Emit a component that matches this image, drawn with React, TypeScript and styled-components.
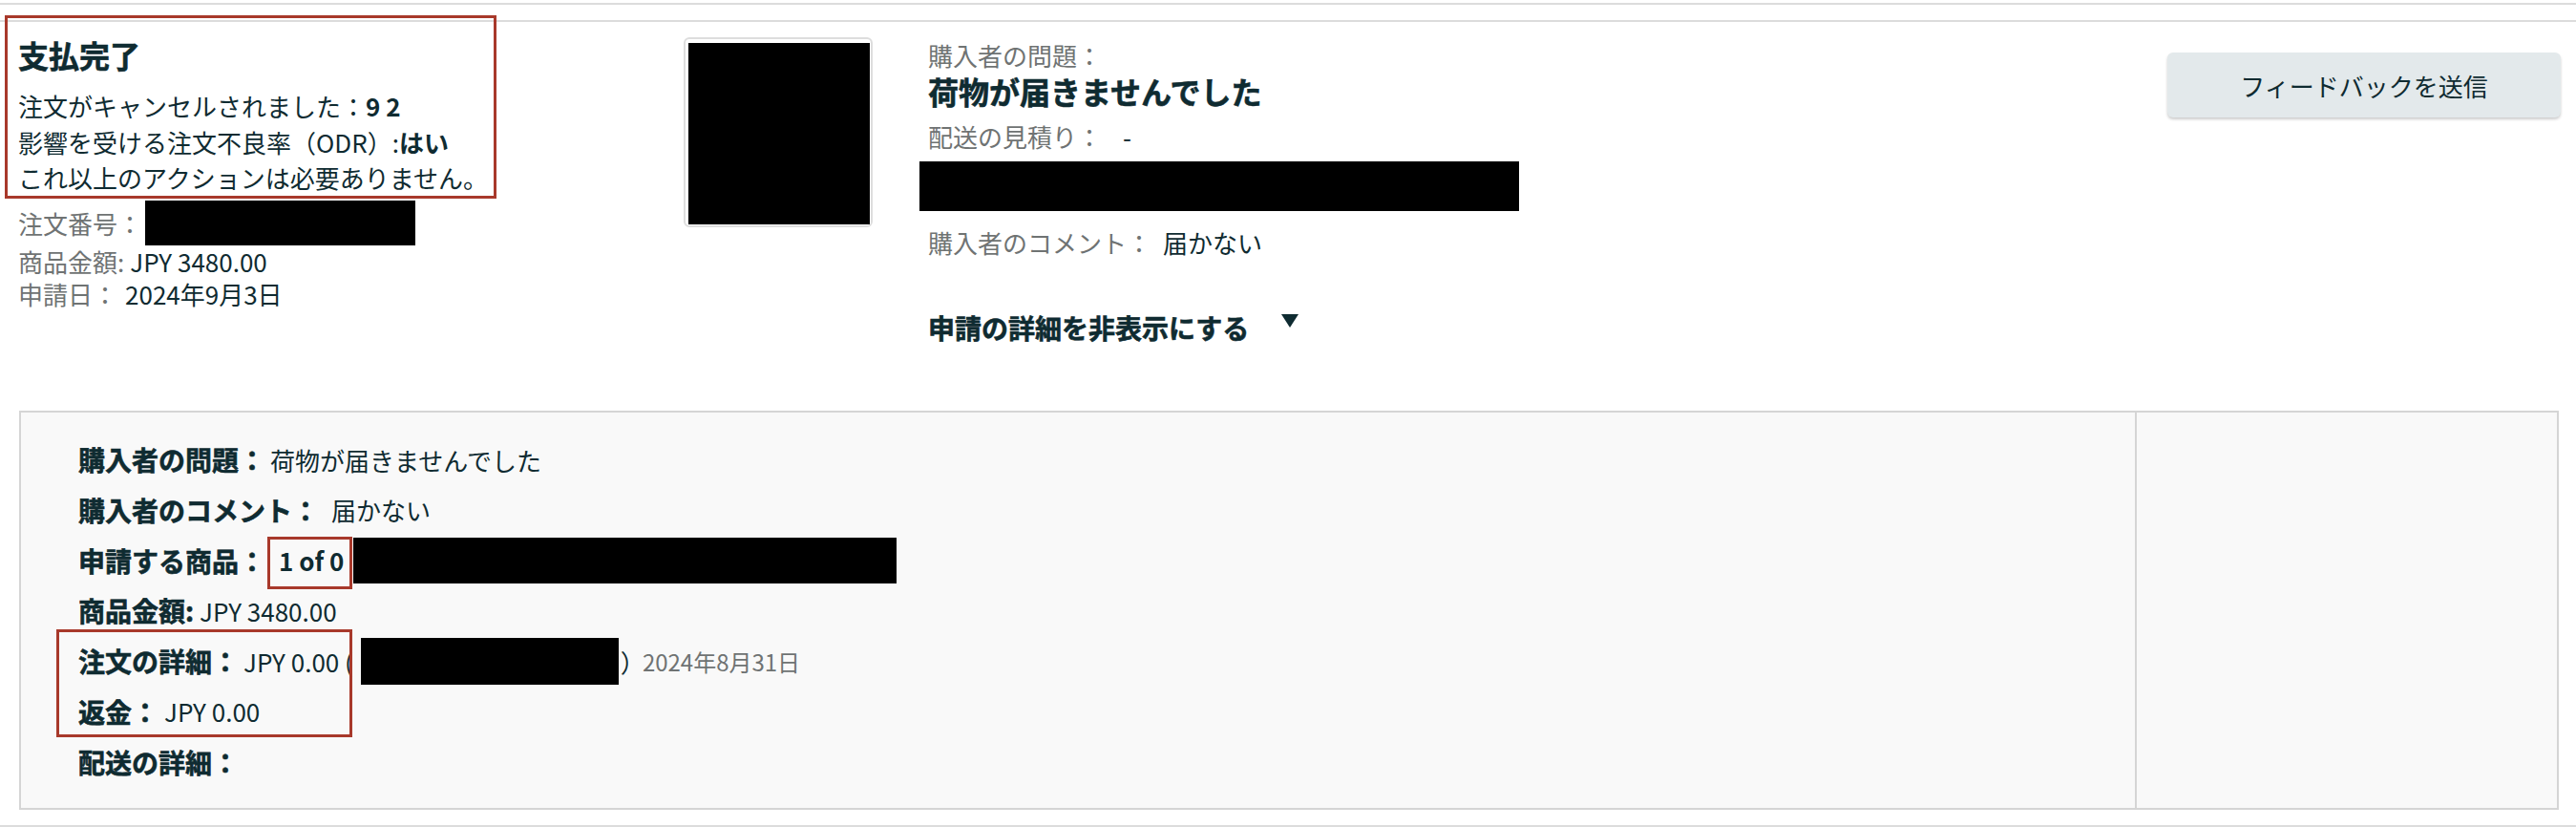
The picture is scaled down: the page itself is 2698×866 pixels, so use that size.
import React from "react";
import styled, { createGlobalStyle, css } from "styled-components";

const INK = "#0f2b31";
const MUTED = "#6f7373";
const RED = "#a8392b";
const RULE = "#dcdcdc";
const PANEL_LINE = "#d5d5d5";
const FONT = `"Noto Sans CJK JP", "Noto Sans", sans-serif`;

const heavy = css`
  font-weight: 700;
  -webkit-text-stroke: 0.6px currentColor;
`;

const GlobalStyle = createGlobalStyle`
  html, body { margin: 0; padding: 0; background: #ffffff; }
  body { font-family: ${FONT}; color: ${INK}; }
  * { box-sizing: border-box; }
`;

const Page = styled.div`
  width: 2698px;
  height: 866px;
  overflow: hidden;
  background: #ffffff;
`;

const PrevCardEdge = styled.div`
  height: 5px;
  border-bottom: 2px solid ${RULE};
`;

const Card = styled.section`
  margin-top: 16px;
  border-top: 2px solid ${RULE};
  border-bottom: 2px solid ${RULE};
`;

const Summary = styled.div`
  display: flex;
  align-items: flex-start;
  padding-bottom: 67.5px;
`;

/* ---------- status column ---------- */
const StatusColumn = styled.div`
  margin-left: 8px;
  width: 509px;
  flex: none;
`;

const StatusBlock = styled.div`
  margin-top: -4px;
  padding: 18px 0 0 11px;
  outline: 3px solid ${RED};
`;

const StatusTitle = styled.h2`
  margin: 0 0 15px;
  font-size: 32px;
  line-height: 40px;
  ${heavy};
`;

const StatusLine = styled.div`
  font-size: 26px;
  line-height: 37.5px;
  white-space: nowrap;
`;

const Strong = styled.strong`
  font-weight: 700;
`;

const MetaList = styled.div`
  margin: 5.5px 0 0 11px;
`;

const MetaRow = styled.div<{ $lh: number }>`
  display: flex;
  align-items: center;
  height: ${(p) => p.$lh}px;
  font-size: 26px;
  white-space: nowrap;
`;

const Muted = styled.span`
  color: ${MUTED};
`;

const Value = styled.span<{ $gap?: number }>`
  margin-left: ${(p) => p.$gap ?? 0}px;
  color: ${INK};
`;

const Redaction = styled.span<{ $w: number; $h: number; $gap?: number }>`
  display: inline-block;
  flex: none;
  width: ${(p) => p.$w}px;
  height: ${(p) => p.$h}px;
  margin-left: ${(p) => p.$gap ?? 0}px;
  background: #000000;
`;

/* ---------- product image ---------- */
const ImageFrame = styled.div`
  flex: none;
  margin: 16px 0 0 199px;
  width: 198px;
  height: 199px;
  padding: 4px 1px 1px 3px;
  border: 2px solid #dddddd;
  border-radius: 6px;
  background: #ffffff;
`;

const ImageFill = styled.div`
  width: 100%;
  height: 100%;
  background: #000000;
`;

/* ---------- request details ---------- */
const Details = styled.div`
  margin-left: 58px;
  padding-top: 15.5px;
  display: flex;
  flex-direction: column;
  align-items: flex-start;
`;

const FieldLine = styled.div<{ $mt?: number }>`
  margin-top: ${(p) => p.$mt ?? 0}px;
  font-size: 26px;
  line-height: 38px;
  white-space: nowrap;
  display: flex;
  align-items: center;
`;

const IssueTitle = styled.div`
  margin-top: -2px;
  font-size: 32px;
  line-height: 40px;
  ${heavy};
  white-space: nowrap;
`;

const AddressBar = styled.div`
  margin: 7.5px 0 0 -9px;
  width: 628px;
  height: 52px;
  background: #000000;
`;

const ToggleLink = styled.div`
  margin-top: 50px;
  display: flex;
  align-items: center;
  font-size: 28px;
  line-height: 40px;
  ${heavy};
  white-space: nowrap;
  cursor: pointer;
`;

const Caret = styled.span`
  margin: 0 0 14px 34px;
  width: 0;
  height: 0;
  border-left: 9px solid transparent;
  border-right: 9px solid transparent;
  border-top: 14px solid ${INK};
`;

const FeedbackButton = styled.button`
  flex: none;
  margin: 32px 16px 0 auto;
  width: 412px;
  height: 68px;
  border: none;
  border-radius: 6px;
  background: #e3e9eb;
  box-shadow: 0 2px 3px rgba(0, 0, 0, 0.2);
  font-family: ${FONT};
  font-size: 26px;
  color: ${INK};
  cursor: pointer;
`;

/* ---------- details panel ---------- */
const Panel = styled.div`
  margin: 0 18px 16px 20px;
  height: 418px;
  display: flex;
  background: #f9f9f9;
  border: 2px solid ${PANEL_LINE};
`;

const PanelMain = styled.div`
  flex: 1;
  padding: 29px 0 0 60px;
  display: flex;
  flex-direction: column;
  gap: 12.75px;
`;

const PanelSide = styled.div`
  flex: none;
  width: 442px;
  border-left: 2px solid ${PANEL_LINE};
`;

const RowGroup = styled.div`
  position: relative;
  display: flex;
  flex-direction: column;
  gap: 12.75px;

  &::after {
    content: "";
    position: absolute;
    left: -23px;
    top: -13px;
    bottom: -7px;
    width: 304px;
    border: 3px solid ${RED};
    pointer-events: none;
  }
`;

const DetailRow = styled.div`
  display: flex;
  align-items: center;
  height: 40px;
  white-space: nowrap;
`;

const RowLabel = styled.span`
  font-size: 28px;
  ${heavy};
  color: ${INK};
`;

const RowValue = styled.span<{ $gap?: number }>`
  margin-left: ${(p) => p.$gap ?? 0}px;
  font-size: 26px;
  color: ${INK};
`;

const ItemCount = styled.span`
  position: relative;
  margin-left: 14px;
  font-size: 26px;
  font-weight: 700;
  line-height: 40px;

  &::after {
    content: "";
    position: absolute;
    left: -12px;
    right: -9px;
    top: -5px;
    bottom: -10px;
    border: 3px solid ${RED};
    pointer-events: none;
  }
`;

const DateText = styled.span`
  margin-left: -3px;
  font-size: 24px;
  color: ${MUTED};
`;

export default function App() {
  return (
    <>
      <GlobalStyle />
      <Page>
        <PrevCardEdge />
        <Card>
          <Summary>
            <StatusColumn>
              <StatusBlock>
                <StatusTitle>支払完了</StatusTitle>
                <StatusLine>
                  注文がキャンセルされました：<Strong>9 2</Strong>
                </StatusLine>
                <StatusLine>
                  影響を受ける注文不良率（ODR）:<Strong>はい</Strong>
                </StatusLine>
                <StatusLine>これ以上のアクションは必要ありません。</StatusLine>
              </StatusBlock>
              <MetaList>
                <MetaRow $lh={47}>
                  <Muted>注文番号：</Muted>
                  <Redaction $w={283} $h={47} $gap={3} />
                </MetaRow>
                <MetaRow $lh={32}>
                  <Muted>商品金額:</Muted>
                  <Value $gap={6}>JPY 3480.00</Value>
                </MetaRow>
                <MetaRow $lh={36}>
                  <Muted>申請日：</Muted>
                  <Value $gap={8}>2024年9月3日</Value>
                </MetaRow>
              </MetaList>
            </StatusColumn>

            <ImageFrame>
              <ImageFill />
            </ImageFrame>

            <Details>
              <FieldLine>
                <Muted>購入者の問題：</Muted>
              </FieldLine>
              <IssueTitle>荷物が届きませんでした</IssueTitle>
              <FieldLine $mt={9}>
                <Muted>配送の見積り：</Muted>
                <Value $gap={22}>-</Value>
              </FieldLine>
              <AddressBar />
              <FieldLine $mt={13.5}>
                <Muted>購入者のコメント：</Muted>
                <Value $gap={12}>届かない</Value>
              </FieldLine>
              <ToggleLink>
                申請の詳細を非表示にする
                <Caret />
              </ToggleLink>
            </Details>

            <FeedbackButton type="button">フィードバックを送信</FeedbackButton>
          </Summary>

          <Panel>
            <PanelMain>
              <DetailRow>
                <RowLabel>購入者の問題：</RowLabel>
                <RowValue $gap={5}>荷物が届きませんでした</RowValue>
              </DetailRow>
              <DetailRow>
                <RowLabel>購入者のコメント：</RowLabel>
                <RowValue $gap={13}>届かない</RowValue>
              </DetailRow>
              <DetailRow>
                <RowLabel>申請する商品：</RowLabel>
                <ItemCount>1 of 0</ItemCount>
                <Redaction $w={569} $h={48} $gap={10} />
              </DetailRow>
              <DetailRow>
                <RowLabel>商品金額:</RowLabel>
                <RowValue $gap={6}>JPY 3480.00</RowValue>
              </DetailRow>
              <RowGroup>
                <DetailRow>
                  <RowLabel>注文の詳細：</RowLabel>
                  <RowValue $gap={5}>JPY 0.00 (</RowValue>
                  <Redaction $w={270} $h={49} $gap={8} />
                  <RowValue $gap={2}>）</RowValue>
                  <DateText>2024年8月31日</DateText>
                </DetailRow>
                <DetailRow>
                  <RowLabel>返金：</RowLabel>
                  <RowValue $gap={6}>JPY 0.00</RowValue>
                </DetailRow>
              </RowGroup>
              <DetailRow>
                <RowLabel>配送の詳細：</RowLabel>
              </DetailRow>
            </PanelMain>
            <PanelSide />
          </Panel>
        </Card>
      </Page>
    </>
  );
}
